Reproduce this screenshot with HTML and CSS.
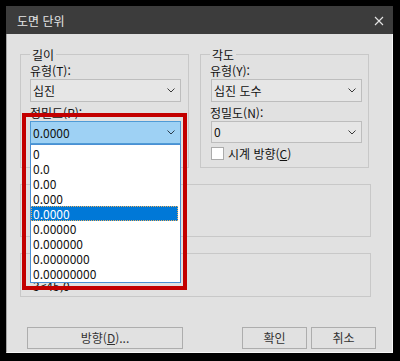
FILE: index.html
```html
<!DOCTYPE html>
<html lang="ko">
<head>
<meta charset="utf-8">
<title>도면 단위</title>
<link rel="stylesheet" href="styles.css">
</head>
<body>
<div class="window">
  <div class="titlebar">
    <span class="title">도면 단위</span>
    <svg class="close" width="10" height="10" viewBox="0 0 10 10"><path d="M1 1L9 9M9 1L1 9" stroke="#e4e4e4" stroke-width="1.1" fill="none"/></svg>
  </div>
  <div class="dialog">
    <div class="top-row">
      <fieldset class="group group-left">
        <legend>길이</legend>
        <div class="label">유형(T):</div>
        <div class="combo"><span>십진</span><svg class="chev" width="8" height="5" viewBox="0 0 8 5"><path d="M0.5 0.5L4 4L7.5 0.5" stroke="#3a3a3a" fill="none"/></svg></div>
        <div class="label label-gap">정밀도(P):</div>
        <div class="combo-wrap">
          <div class="combo combo-open"><span>0.0000</span><svg class="chev" width="8" height="5" viewBox="0 0 8 5"><path d="M0.5 0.5L4 4L7.5 0.5" stroke="#2a3a4a" fill="none"/></svg></div>
          <ul class="droplist">
            <li>0</li>
            <li>0.0</li>
            <li>0.00</li>
            <li>0.000</li>
            <li class="selected">0.0000</li>
            <li>0.00000</li>
            <li>0.000000</li>
            <li>0.0000000</li>
            <li>0.00000000</li>
          </ul>
          <div class="highlight"></div>
        </div>
      </fieldset>
      <fieldset class="group group-right">
        <legend>각도</legend>
        <div class="label">유형(Y):</div>
        <div class="combo"><span>십진 도수</span><svg class="chev" width="8" height="5" viewBox="0 0 8 5"><path d="M0.5 0.5L4 4L7.5 0.5" stroke="#3a3a3a" fill="none"/></svg></div>
        <div class="label label-gap">정밀도(N):</div>
        <div class="combo combo-short"><span>0</span><svg class="chev" width="8" height="5" viewBox="0 0 8 5"><path d="M0.5 0.5L4 4L7.5 0.5" stroke="#3a3a3a" fill="none"/></svg></div>
        <div class="check"><span class="box"></span><span>시계 방향(<u>C</u>)</span></div>
      </fieldset>
    </div>
    <div class="frame frame-scale"></div>
    <div class="frame frame-sample">
      <div class="sample-line">3&lt;45,0</div>
    </div>
    <div class="buttons">
      <div class="btn btn-dir">방향(<u>D</u>)...</div>
      <div class="btn btn-ok">확인</div>
      <div class="btn btn-cancel">취소</div>
    </div>
  </div>
</div>
</body>
</html>
```

FILE: styles.css
```css
html, body {
  margin: 0;
  padding: 0;
}
body {
  background: #000;
  width: 400px;
  height: 361px;
  overflow: hidden;
  font-family: "Noto Sans CJK KR", "Noto Sans", sans-serif;
  font-size: 12px;
  color: #111;
}
.window {
  margin: 6px 0 0 6px;
  width: 387px;
}
.titlebar {
  height: 28px;
  background: #3c3c3c;
  display: flex;
  align-items: center;
  justify-content: space-between;
  padding: 0 9px 0 11px;
  box-sizing: border-box;
}
.title {
  color: #e6e6e6;
  font-size: 12px;
  line-height: 14px;
  margin-top: 2px;
}
.close {
  display: block;
  margin-top: 2px;
}
.dialog {
  background: #e1e1e1;
  border-left: 1px solid #a3a3a3;
  border-right: 1px solid #f6f6f6;
  border-bottom: 1px solid #f6f6f6;
  padding: 14px 0 3px 13px;
  height: 319px;
  box-sizing: border-box;
}
.top-row {
  display: flex;
  gap: 11px;
  width: 349px;
}
.group {
  margin: 0;
  min-width: 0;
  border: 1px solid #c8c8c8;
  box-sizing: border-box;
}
.group legend {
  padding: 0 2px;
  font-size: 12px;
  line-height: 13px;
}
.group-left {
  width: 169px;
  padding: 2px 7px 7px 9px;
}
.group-right {
  width: 169px;
  padding: 2px 6px 7px 9px;
}
.label {
  line-height: 16px;
  height: 16px;
  white-space: nowrap;
}
.label-gap {
  margin-top: 3px;
}
.combo {
  height: 23px;
  width: 151px;
  box-sizing: border-box;
  border: 1px solid #bdbdbd;
  background: #e6e6e6;
  display: flex;
  align-items: center;
  justify-content: space-between;
  padding: 0 5px 0 2px;
  line-height: 16px;
}
.group-right .combo {
  margin-left: 1px;
}
.combo-short {
  height: 22px;
}
.chev {
  display: block;
}
.combo-wrap {
  position: relative;
  width: 151px;
}
.combo-open {
  background: #9ed1f4;
  border-color: #4f9bd6;
}
.droplist {
  position: absolute;
  left: 0;
  top: 23px;
  width: 151px;
  box-sizing: border-box;
  margin: 0;
  padding: 1px 2px 1px 0;
  list-style: none;
  background: #fff;
  border: 1px solid #4a8fd4;
  z-index: 5;
}
.droplist li {
  height: 15px;
  line-height: 15px;
  padding-left: 2px;
  color: #111;
}
.droplist li.selected {
  background: #0078d7;
  color: #fff;
  outline: 1px dotted #e8b060;
  outline-offset: -1px;
}
.highlight {
  position: absolute;
  left: -8px;
  top: -8px;
  width: 165px;
  height: 177px;
  box-sizing: border-box;
  border: 4px solid #c30000;
  z-index: 6;
  pointer-events: none;
}
.check {
  display: flex;
  align-items: center;
  gap: 4px;
  height: 13px;
  margin-top: 4px;
  margin-left: 1px;
  line-height: 13px;
}
.box {
  width: 13px;
  height: 13px;
  box-sizing: border-box;
  background: #fff;
  border: 1px solid #ababab;
}
.frame {
  width: 351px;
  box-sizing: border-box;
  border: 1px solid #c8c8c8;
  margin-top: 16px;
}
.frame-scale {
  height: 53px;
}
.frame-sample {
  height: 44px;
  padding: 25px 0 0 12px;
}
.sample-line {
  line-height: 14px;
  height: 14px;
}
.buttons {
  display: flex;
  margin-top: 30px;
  margin-left: 7px;
  width: 349px;
}
.btn {
  height: 22px;
  box-sizing: border-box;
  border: 1px solid #adadad;
  background: #e1e1e1;
  display: flex;
  align-items: center;
  justify-content: center;
  color: #333;
  line-height: 14px;
}
.btn-dir {
  width: 156px;
  margin-right: auto;
}
.btn-ok {
  width: 65px;
}
.btn-cancel {
  width: 65px;
  margin-left: 4px;
}
```
